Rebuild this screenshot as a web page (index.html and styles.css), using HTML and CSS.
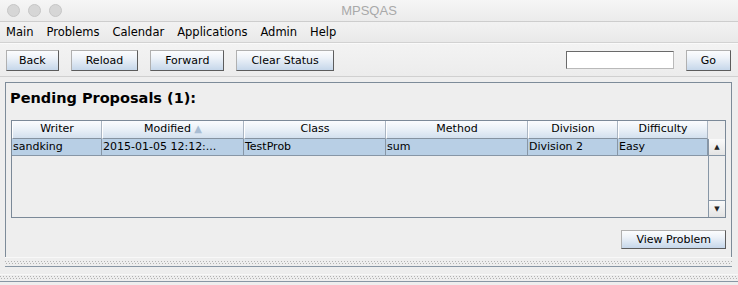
FILE: index.html
```html
<!DOCTYPE html>
<html lang="en">
<head>
    <meta charset="UTF-8">
    <title>MPSQAS</title>
<link rel="stylesheet" href="styles.css">
</head>
<body>
<div class="window">
    <div class="titlebar">
        <div class="lights"><span></span><span></span><span></span></div>
        <div class="title">MPSQAS</div>
        <div></div>
    </div>
    <div class="menubar">
        <span>Main</span>
        <span>Problems</span>
        <span>Calendar</span>
        <span>Applications</span>
        <span>Admin</span>
        <span>Help</span>
    </div>
    <div class="toolbar">
        <button class="btn narrow">Back</button>
        <button class="btn">Reload</button>
        <button class="btn">Forward</button>
        <button class="btn">Clear Status</button>
        <div class="spacer"></div>
        <input class="field" type="text">
        <button class="btn">Go</button>
    </div>
    <div class="main">
        <div class="panel">
            <h1 class="heading">Pending Proposals (1):</h1>
            <div class="grid">
                <div class="th">Writer</div>
                <div class="th">Modified <span class="sort">&#9650;</span></div>
                <div class="th">Class</div>
                <div class="th">Method</div>
                <div class="th">Division</div>
                <div class="th">Difficulty</div>
                <div class="corner"></div>

                <div class="td">sandking</div>
                <div class="td">2015-01-05 12:12:...</div>
                <div class="td">TestProb</div>
                <div class="td">sum</div>
                <div class="td">Division 2</div>
                <div class="td">Easy</div>
                <div class="scroll">
                    <div class="arrow">&#9650;</div>
                    <div class="track"></div>
                    <div class="arrow down">&#9660;</div>
                </div>
                <div class="empty"></div>
            </div>
            <div class="actions">
                <button class="btn small">View Problem</button>
            </div>
        </div>
        <div class="divider"><div class="dots"></div><div class="dots odd"></div></div>
    </div>
    <div class="divider full"><div class="dots"></div><div class="dots odd"></div></div>
</div>
</body>
</html>
```

FILE: styles.css
```css
body{
    margin: 0;
    background-color: #eeeeee;
    font-family: "DejaVu Sans", sans-serif;
    font-size: 11px;
    color: #000000;
}
.window{
    width: 738px;
    height: 285px;
    display: flex;
    flex-direction: column;
    overflow: hidden;
}

/* title bar */
.titlebar{
    height: 21px;
    border-bottom: 1px solid #cdcdcd;
    background: linear-gradient(#f6f6f6, #ebebeb);
    display: grid;
    grid-template-columns: 1fr auto 1fr;
    align-items: center;
}
.lights{
    display: flex;
    gap: 8px;
    padding-left: 7px;
}
.lights span{
    width: 11px;
    height: 11px;
    border-radius: 50%;
    background-color: #d6d6d6;
    border: 0.5px solid #c6c6c6;
}
.title{
    font-family: "Liberation Sans", sans-serif;
    font-size: 13px;
    color: #a9a9a9;
}

/* menu */
.menubar{
    height: 20px;
    display: flex;
    align-items: center;
    background: linear-gradient(#f2f2f2, #e9e9e9);
    border-bottom: 1px solid #d2d2d2;
    font-size: 11.5px;
}
.menubar span{
    padding: 0 7px 0 6px;
}

/* toolbar */
.toolbar{
    height: 34px;
    display: flex;
    align-items: center;
    gap: 12px;
    padding: 0 7px 0 6px;
    background: linear-gradient(#f3f3f3, #ececec);
    border-top: 1px solid #fafafa;
    border-bottom: 1px solid #d0d0d0;
    box-sizing: border-box;
}
.spacer{
    flex: 1;
}
.btn{
    height: 21px;
    padding: 0 14px;
    font-family: "DejaVu Sans", sans-serif;
    font-size: 11px;
    color: #000000;
    border: 1px solid;
    border-color: #b0b0b0 #5c5c5c #5c5c5c #b0b0b0;
    border-radius: 0;
    background: linear-gradient(#fcfdfe, #eef3f9 35%, #c6d7ea);
}
.btn.narrow{
    padding: 0 12px;
}
.btn.small{
    height: 19px;
}
.field{
    width: 108px;
    height: 18px;
    box-sizing: border-box;
    border: 1px solid;
    border-color: #6a6a6a #b9b9b9 #b9b9b9 #6a6a6a;
    background-color: #ffffff;
}

/* main panel */
.main{
    padding: 5px 6px 0 5px;
}
.panel{
    border: 1px solid #7d8b99;
    border-bottom: none;
    height: 175px;
    box-sizing: border-box;
}
.heading{
    margin: 0;
    padding: 7px 0 0 4px;
    height: 37px;
    box-sizing: border-box;
    font-size: 14.5px;
    font-weight: bold;
}

/* table */
.grid{
    margin: 0 5px 0 5px;
    height: 98px;
    box-sizing: border-box;
    border: 1px solid #7b8998;
    display: grid;
    grid-template-columns: 90px 142px 142px 142px 90px 90px 1fr;
    grid-template-rows: 18px 17px 1fr;
}
.th{
    text-align: center;
    line-height: 16px;
    background: linear-gradient(#fbfcfe, #e9f0f7 50%, #d3e0ee);
    border-left: 1px solid #ffffff;
    border-right: 1px solid #aab5c2;
    border-bottom: 1px solid #8592a0;
}
.sort{
    font-size: 10px;
    color: #a9bdd3;
}
.corner{
    background-color: #eeeeee;
}
.td{
    background-color: #b8cfe5;
    border-right: 1px solid #8796a6;
    border-bottom: 1px solid #8796a6;
    line-height: 16px;
    padding-left: 1px;
    white-space: nowrap;
    overflow: hidden;
}
.scroll{
    grid-row: 2 / 4;
    grid-column: 7;
    display: flex;
    flex-direction: column;
    border-left: 1px solid #8796a6;
    background-color: #eeeeee;
}
.arrow{
    height: 16px;
    font-size: 7px;
    line-height: 16px;
    text-align: center;
    color: #222222;
    background: linear-gradient(#fafafa, #e4e4e4);
    border-bottom: 1px solid #8796a6;
}
.arrow.down{
    border-bottom: none;
    border-top: 1px solid #8796a6;
}
.track{
    flex: 1;
}
.empty{
    grid-column: 1 / 7;
}

.actions{
    display: flex;
    justify-content: flex-end;
    padding: 12px 5px 0 0;
}

/* split pane dividers */
.divider{
    height: 10px;
    box-sizing: border-box;
    padding-top: 3px;
    border-top: 1px solid #f8f8f8;
    border-bottom: 1px solid #8896a4;
}
.divider.full{
    margin-top: 7px;
    height: 8px;
    padding-top: 1px;
}
.dots{
    height: 1px;
    background-image: linear-gradient(90deg, #b3b3b3 1px, transparent 1px);
    background-size: 3px 1px;
}
.dots.odd{
    margin-top: 1px;
    background-position: 1px 0;
}
```
